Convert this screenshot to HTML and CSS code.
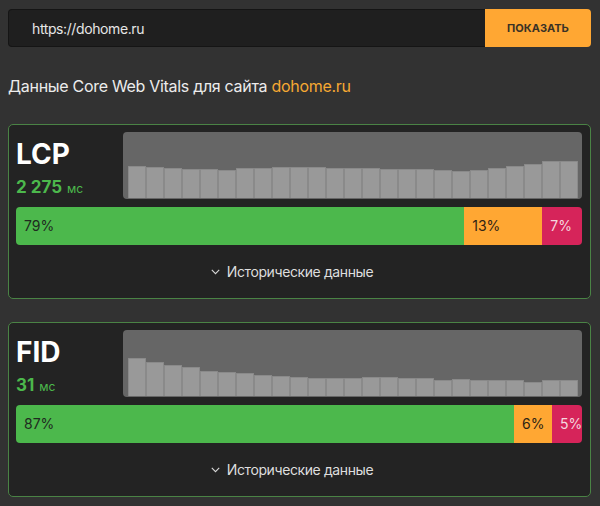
FILE: index.html
```html
<!DOCTYPE html>
<html lang="ru">
<head>
<meta charset="utf-8">
<title>Core Web Vitals</title>
<link rel="stylesheet" href="styles.css">
</head>
<body>
<form class="search">
  <div class="search-input">https://dohome.ru</div>
  <button class="search-btn" type="button">ПОКАЗАТЬ</button>
</form>

<h1 class="title">Данные Core Web Vitals для сайта <span class="site">dohome.ru</span></h1>

<section class="card">
  <div class="card-top">
    <div class="metric">
      <div class="metric-name">LCP</div>
      <div class="metric-value">2 275 <span class="unit">мс</span></div>
    </div>
    <div class="chart">
      <div class="bar" style="height:32px"></div>
      <div class="bar" style="height:31px"></div>
      <div class="bar" style="height:30px"></div>
      <div class="bar" style="height:29px"></div>
      <div class="bar" style="height:29px"></div>
      <div class="bar" style="height:28px"></div>
      <div class="bar" style="height:30px"></div>
      <div class="bar" style="height:30px"></div>
      <div class="bar" style="height:31px"></div>
      <div class="bar" style="height:31px"></div>
      <div class="bar" style="height:31px"></div>
      <div class="bar" style="height:30px"></div>
      <div class="bar" style="height:30px"></div>
      <div class="bar" style="height:30px"></div>
      <div class="bar" style="height:29px"></div>
      <div class="bar" style="height:29px"></div>
      <div class="bar" style="height:29px"></div>
      <div class="bar" style="height:28px"></div>
      <div class="bar" style="height:27px"></div>
      <div class="bar" style="height:28px"></div>
      <div class="bar" style="height:30px"></div>
      <div class="bar" style="height:32px"></div>
      <div class="bar" style="height:34px"></div>
      <div class="bar" style="height:37px"></div>
      <div class="bar" style="height:37px"></div>
    </div>
  </div>
  <div class="dist">
    <div class="seg good" style="width:79.2%">79%</div>
    <div class="seg avg" style="width:13.8%">13%</div>
    <div class="seg poor" style="width:7%">7%</div>
  </div>
  <div class="history">
    <svg class="chev" width="9" height="6" viewBox="0 0 9 6"><path d="M0.8 0.8 L4.5 4.6 L8.2 0.8" fill="none" stroke="#d8d8d8" stroke-width="1.1"/></svg>
    <span>Исторические данные</span>
  </div>
</section>

<section class="card">
  <div class="card-top">
    <div class="metric">
      <div class="metric-name">FID</div>
      <div class="metric-value">31 <span class="unit">мс</span></div>
    </div>
    <div class="chart">
      <div class="bar" style="height:38px"></div>
      <div class="bar" style="height:34px"></div>
      <div class="bar" style="height:31px"></div>
      <div class="bar" style="height:29px"></div>
      <div class="bar" style="height:25px"></div>
      <div class="bar" style="height:24px"></div>
      <div class="bar" style="height:23px"></div>
      <div class="bar" style="height:21px"></div>
      <div class="bar" style="height:20px"></div>
      <div class="bar" style="height:19px"></div>
      <div class="bar" style="height:18px"></div>
      <div class="bar" style="height:18px"></div>
      <div class="bar" style="height:18px"></div>
      <div class="bar" style="height:19px"></div>
      <div class="bar" style="height:19px"></div>
      <div class="bar" style="height:18px"></div>
      <div class="bar" style="height:18px"></div>
      <div class="bar" style="height:16px"></div>
      <div class="bar" style="height:17px"></div>
      <div class="bar" style="height:16px"></div>
      <div class="bar" style="height:16px"></div>
      <div class="bar" style="height:16px"></div>
      <div class="bar" style="height:14px"></div>
      <div class="bar" style="height:16px"></div>
      <div class="bar" style="height:16px"></div>
    </div>
  </div>
  <div class="dist">
    <div class="seg good" style="width:88%">87%</div>
    <div class="seg avg" style="width:6.7%">6%</div>
    <div class="seg poor" style="width:5.3%">5%</div>
  </div>
  <div class="history">
    <svg class="chev" width="9" height="6" viewBox="0 0 9 6"><path d="M0.8 0.8 L4.5 4.6 L8.2 0.8" fill="none" stroke="#d8d8d8" stroke-width="1.1"/></svg>
    <span>Исторические данные</span>
  </div>
</section>
</body>
</html>
```

FILE: styles.css
```css
* { box-sizing: border-box; }

html, body {
  margin: 0;
  background: #323232;
}

body {
  padding: 9px 9px 0 8px;
  font-family: Inter, "Liberation Sans", Arial, sans-serif;
  color: #ececec;
}

.search {
  display: flex;
  height: 38px;
  margin: 0;
}

.search-input {
  flex: 1;
  background: #1f1f1f;
  border: 1px solid #151515;
  border-right: none;
  border-radius: 4px 0 0 4px;
  padding-left: 23px;
  display: flex;
  align-items: center;
  font-size: 14px;
  letter-spacing: -0.4px;
  color: #e6e6e6;
}

.search-btn {
  width: 106px;
  border: none;
  background: #ffa733;
  border-radius: 0 4px 4px 0;
  font-family: Inter, "Liberation Sans", Arial, sans-serif;
  font-size: 11px;
  font-weight: 700;
  letter-spacing: 0;
  color: #3a3226;
  padding: 0;
}

.title {
  margin: 27px 0 26px;
  font-size: 16px;
  line-height: 24px;
  font-weight: 400;
  letter-spacing: -0.3px;
  color: #ececec;
}

.site {
  color: #f7a932;
}

.card {
  background: #232323;
  border: 1px solid #4a8345;
  border-radius: 5px;
  padding: 7px 8px 0 7px;
  margin-bottom: 23px;
}

.card-top {
  display: flex;
  height: 67px;
}

.metric {
  width: 107px;
  flex: none;
  padding-top: 8px;
}

.metric-name {
  font-size: 28px;
  line-height: 28px;
  font-weight: 700;
  color: #ffffff;
}

.metric-value {
  margin-top: 9px;
  font-size: 17px;
  line-height: 20px;
  font-weight: 700;
  color: #4cb84c;
}

.unit {
  font-size: 12px;
  font-weight: 400;
  margin-left: 1px;
}

.chart {
  flex: 1;
  background: #666666;
  border-radius: 4px;
  display: flex;
  align-items: flex-end;
  padding: 0 4px 1px 5px;
}

.bar {
  flex: 1;
  background: #999999;
  border: 1px solid #8a8a8a;
  border-bottom: none;
  border-radius: 1px 1px 0 0;
}

.dist {
  display: flex;
  height: 38px;
  margin-top: 8px;
  border-radius: 4px;
  overflow: hidden;
  font-size: 14px;
  line-height: 38px;
}

.seg {
  padding-left: 8px;
  white-space: nowrap;
  overflow: hidden;
}

.good { background: #4cb84c; color: #1f2a1f; }
.avg { background: #ffa733; color: #2f2414; }
.poor { background: #d6245a; color: #f4d6df; }

.history {
  height: 53px;
  display: flex;
  align-items: center;
  justify-content: center;
  gap: 7px;
  padding-right: 14px;
  font-size: 14px;
  letter-spacing: -0.4px;
  color: #dedede;
}

.chev {
  display: block;
  margin-top: 1px;
}
```
